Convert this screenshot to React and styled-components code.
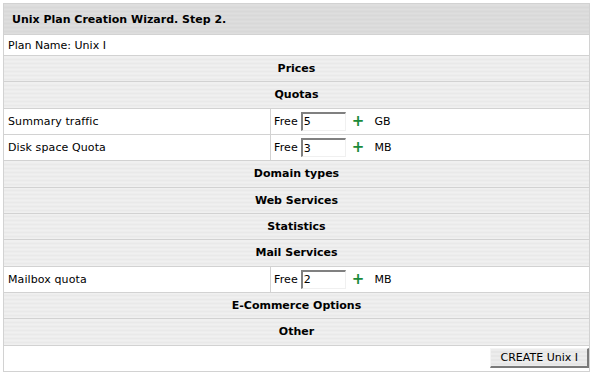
import styled, { createGlobalStyle } from 'styled-components';

const GlobalStyle = createGlobalStyle`
  body {
    margin: 0;
    padding: 3px 2px 3px 3px;
    background: #ffffff;
    font-family: "DejaVu Sans", Verdana, sans-serif;
    font-size: 11px;
    color: #000;
  }
`;

const stripes = (a, b) => `repeating-linear-gradient(to bottom, ${a} 0px, ${a} 2px, ${b} 2px, ${b} 4px)`;

const Table = styled.table`
  width: 587px;
  border-collapse: collapse;
  border: 1px solid #c6c6c6;
  table-layout: fixed;

  td {
    border: 1px solid #d2d2d2;
    padding: 0;
  }
`;

const HeaderCell = styled.td`
  height: 30px;
  padding-left: 8px !important;
  font-weight: bold;
  background: ${stripes('#dedede', '#d8d8d8')};
`;

const NameCell = styled.td`
  height: 20px;
  padding-left: 4px !important;
`;

const SectionCell = styled.td`
  height: 25.33px;
  text-align: center;
  font-weight: bold;
  background: ${stripes('#f0f0f0', '#e9e9e9')};
`;

const LabelCell = styled.td`
  height: 25.33px;
  padding-left: 4px !important;
  letter-spacing: 0.1px;
`;

const ValueCell = styled.td`
  padding-left: 3px !important;
  letter-spacing: 0.1px;
`;

const Field = styled.div`
  display: flex;
  align-items: center;
`;

const Amount = styled.input`
  width: 41px;
  height: 16px;
  margin: 0 0 0 3px;
  padding: 0 0 0 1px;
  border-style: solid;
  border-width: 2px 1px 1px 2px;
  border-color: #808080 #f0f0f0 #f0f0f0 #808080;
  font-family: "DejaVu Sans", Verdana, sans-serif;
  font-size: 11px;
  background: #fff;
  outline: none;
`;

const Plus = styled.span`
  margin-left: 6px;
  color: #1a8a3a;
  font-weight: bold;
  font-size: 15px;
  line-height: 1;
`;

const Unit = styled.span`
  margin-left: 10px;
`;

const ButtonCell = styled.td`
  height: 25.33px;
  text-align: right;
  padding-right: 0 !important;
`;

const Button = styled.button`
  height: 20px;
  padding: 0 9px 0 10px;
  font-family: "DejaVu Sans", Verdana, sans-serif;
  font-size: 11px;
  color: #000;
  background: ${stripes('#ececec', '#e6e6e6')};
  border-style: solid;
  border-width: 1px 2px 2px 1px;
  border-color: #f4f4f4 #7a7a7a #7a7a7a #f4f4f4;
  vertical-align: middle;
`;

const Section = ({ title }) => (
  <tr>
    <SectionCell colSpan={2}>{title}</SectionCell>
  </tr>
);

const QuotaRow = ({ label, value, unit }) => (
  <tr>
    <LabelCell>{label}</LabelCell>
    <ValueCell>
      <Field>
        Free
        <Amount defaultValue={value} />
        <Plus>+</Plus>
        <Unit>{unit}</Unit>
      </Field>
    </ValueCell>
  </tr>
);

export default function App() {
  return (
    <>
      <GlobalStyle />
      <Table>
        <colgroup>
          <col style={{ width: 267 }} />
          <col />
        </colgroup>
        <tbody>
          <tr>
            <HeaderCell colSpan={2}>Unix Plan Creation Wizard. Step 2.</HeaderCell>
          </tr>
          <tr>
            <NameCell colSpan={2}>Plan Name: Unix I</NameCell>
          </tr>
          <Section title="Prices" />
          <Section title="Quotas" />
          <QuotaRow label="Summary traffic" value="5" unit="GB" />
          <QuotaRow label="Disk space Quota" value="3" unit="MB" />
          <Section title="Domain types" />
          <Section title="Web Services" />
          <Section title="Statistics" />
          <Section title="Mail Services" />
          <QuotaRow label="Mailbox quota" value="2" unit="MB" />
          <Section title="E-Commerce Options" />
          <Section title="Other" />
          <tr>
            <ButtonCell colSpan={2}>
              <Button>CREATE Unix I</Button>
            </ButtonCell>
          </tr>
        </tbody>
      </Table>
    </>
  );
}
